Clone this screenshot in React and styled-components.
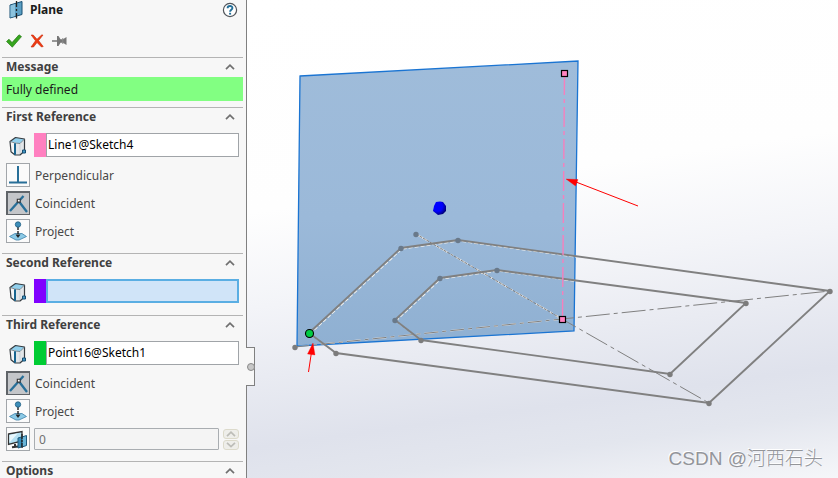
import React, { useState } from 'react';
import styled, { createGlobalStyle } from 'styled-components';

const GlobalStyle = createGlobalStyle`
    * {
        box-sizing: border-box;
    }
    body {
        margin: 0;
        font-family: "Noto Sans", "Open Sans", sans-serif;
        font-size: 12px;
        color: #1a1a1a;
    }
    button, input {
        font: inherit;
        color: inherit;
    }
`;

const Workspace = styled.main`
    display: flex;
    height: 100vh;
    overflow: hidden;
`;

const Panel = styled.aside`
    position: relative;
    flex: 0 0 247px;
    background: #f7f7f7;
    border-right: 1px solid #808080;
    padding: 0 3px 0 2px;
`;

const PanelHeader = styled.header`
    display: flex;
    align-items: center;
    gap: 6px;
    height: 20px;
    padding: 0 5px 0 6px;
`;

const PanelTitle = styled.h1`
    flex: 1;
    margin: 0;
    font-size: 12px;
    line-height: 20px;
    font-weight: bold;
`;

const IconButton = styled.button`
    display: flex;
    padding: 0;
    border: 0;
    background: none;
`;

const Actions = styled.div`
    display: flex;
    align-items: center;
    gap: 8px;
    height: 37px;
    padding: 4px 4px 0;
`;

const Section = styled.section`
    border-top: 1px solid #b4b4b4;
    padding-bottom: ${props => props.$space}px;
`;

const SectionTitle = styled.h2`
    margin: 0;
    font-size: 12px;
`;

const SectionToggle = styled.button`
    display: flex;
    align-items: center;
    justify-content: space-between;
    width: 100%;
    height: 19px;
    padding: 0 8px 2px 4px;
    border: 0;
    background: none;
    color: #404040;
    font-weight: bold;
    line-height: 17px;
    text-align: left;
`;

const Message = styled.p`
    margin: 0;
    padding: 1px 4px 0;
    height: 24px;
    line-height: 24px;
    background: #82ff82;
`;

const Rows = styled.div`
    display: flex;
    flex-direction: column;
    gap: 4px;
    padding: 6px 4px 0;
`;

const Row = styled.div`
    display: flex;
    align-items: center;
    height: 24px;
    gap: ${props => props.$gap || 5}px;
`;

const FieldRow = styled(Row)`
    margin-bottom: 2px;
    gap: 4px;
`;

const FieldLabel = styled.label`
    display: flex;
    align-items: center;
    width: 24px;
    height: 24px;
    padding: 2px 0 0 2px;
`;

const Selection = styled.div`
    flex: 1;
    display: flex;
    height: 24px;
    border-left: 12px solid ${props => props.$color};
`;

const SelectionInput = styled.input`
    flex: 1;
    min-width: 0;
    padding: 0 1px 2px;
    border: ${props => (props.$active ? '2px solid #5aaee3' : '1px solid #a0a4a8')};
    border-radius: 0;
    background: ${props => (props.$active ? '#d0e4f8' : '#ffffff')};
    color: #000000;
    outline: none;
`;

const MateButton = styled.button`
    display: flex;
    flex: none;
    align-items: center;
    justify-content: center;
    width: 24px;
    height: 24px;
    padding: 0;
    border: ${props => (props.$pressed ? '2px solid #606468' : '1px solid #a2a6aa')};
    border-width: ${props => (props.$pressed ? '2px 1px 1px 2px' : '1px')};
    background: ${props => (props.$pressed ? '#c4c6c9' : '#fbfbfb')};
`;

const MateLabel = styled.label`
    color: #484848;
`;

const CountInput = styled.input`
    flex: 1;
    min-width: 0;
    height: 22px;
    padding: 0 4px;
    border: 1px solid #a9adb1;
    border-radius: 1px;
    background: #f4f4f4;
    color: #707070;
`;

const Spinner = styled.div`
    display: flex;
    flex-direction: column;
    gap: 1px;
`;

const SpinButton = styled.button`
    display: flex;
    align-items: center;
    justify-content: center;
    width: 16px;
    height: 10px;
    padding: 0;
    border: 1px solid #dcdacb;
    border-radius: 3px;
    background: #eeeeea;
`;

const PanelHandle = styled.button`
    position: absolute;
    top: 347px;
    right: -9px;
    display: flex;
    align-items: center;
    justify-content: flex-start;
    width: 9px;
    height: 39px;
    padding: 0 0 0 1px;
    border: 1px solid #808080;
    border-left: 0;
    background: #f7f7f7;
    z-index: 1;
    &::before {
        content: "";
        flex: none;
        width: 6px;
        height: 6px;
        border: 1px solid #8a8a8a;
        border-radius: 50%;
        background: #c8c8c8;
    }
`;

const Viewport = styled.div`
    position: relative;
    flex: 1;
    min-width: 0;
    background: linear-gradient(172deg, #ffffff 0%, #fefefe 38%, #f3f4f8 55%, #dfe2ec 80%, #e3e6ee 88%, #f5f6f9 100%);
`;

const Scene = styled.svg`
    display: block;
    width: 100%;
    height: 100%;
`;

const Watermark = styled.span`
    position: absolute;
    right: 15px;
    bottom: 4px;
    font-family: "Liberation Sans", "Noto Sans CJK SC", sans-serif;
    font-weight: 300;
    font-size: 19px;
    line-height: 30px;
    color: #93959a;
    text-shadow: -1px -1px 0 #ffffff;
    white-space: nowrap;
`;

const Chevron = ({ color = '#707070', down, width = 10 }) => (
    <svg width={width} height="6" viewBox="0 0 10 6" fill="none" stroke={color} strokeWidth="1.7">
        <path d={down ? 'M1 0.8 5 4.6 9 0.8' : 'M1 5.2 5 1.2 9 5.2'} />
    </svg>
);

const PlaneIcon = () => (
    <svg width="16" height="20" viewBox="0 0 16 20">
        <path d="M2 5 14 1.500V14.500L2 18Z" fill="#5b9fc4" stroke="#174e72" />
        <path d="M2.500 5.500 7 4V16L2.500 17.500Z" fill="#8bc2dd" />
        <path d="M8.500 1V18.500" stroke="#222222" strokeWidth="1.3" strokeDasharray="6 2 2 2" />
    </svg>
);

const HelpIcon = () => (
    <svg width="16" height="16" viewBox="0 0 16 16" fill="none">
        <circle cx="8" cy="8" r="6.6" fill="#ffffff" stroke="#50545a" strokeWidth="1.2" />
        <path d="M5.6 6.3C5.6 3.2 10.5 3.3 10.4 6C10.4 7.7 8.1 7.8 8.1 9.7" stroke="#236f99" strokeWidth="1.9" />
        <path d="M7.1 10.8H9.1V12.6H7.1Z" fill="#236f99" />
    </svg>
);

const CheckIcon = () => (
    <svg width="16" height="14" viewBox="0 0 16 14">
        <path d="M0.5 7.5 3 5.2 6 8.6 13 0.8 15.5 2.6 6.3 13.2Z" fill="#36a51e" stroke="#267b16" strokeWidth="0.7" />
    </svg>
);

const CancelIcon = () => (
    <svg width="14" height="14" viewBox="0 0 14 14">
        <path d="M1.2 1H3.2L7 5.2 11.600 1H13L8.600 6.600 13.200 12.500 11.500 13 7 8.500 3.500 13H1L5.500 6.800Z" fill="#ef3b12" stroke="#c82808" strokeWidth="0.6" />
    </svg>
);

const PinIcon = () => (
    <svg width="15" height="12" viewBox="0 0 15 12" fill="#777777">
        <path d="M0 5.300H5V6.700H0ZM5 1H6.500L8.500 4.200H11L14.500 2V10L11 7.800H8.500L6.500 11H5Z" />
        <path d="M10.800 3V9" stroke="#8c8c8c" />
    </svg>
);

const CubeIcon = () => (
    <svg width="20" height="21" viewBox="0 0 20 21" strokeLinejoin="round">
        <path d="M2 5.500 7.500 1.500 16.500 3 12 7.500Z" fill="#91d0ed" />
        <path d="M2 5.500 7 7V19L3 15.800Z" fill="#f4f6f7" />
        <path d="M7 7 12 7.500 16.500 3V15L12 19H7Z" fill="#e2e6e9" />
        <path d="M12 7.500V18" stroke="#ccd1d5" />
        <path d="M2 5.500 7.500 1.500 16.500 3V15L12 19H7L3 15.800Z" fill="none" stroke="#363c41" strokeWidth="1.2" />
        <path d="M2 5.500 7 7 12 7.500 16.500 3" fill="none" stroke="#65727b" strokeWidth="0.8" />
        <path d="M7 7.200V18.800" stroke="#17648f" strokeWidth="2" />
        <path d="M14.500 14H17.500V17H14.500Z" fill="#4599c5" stroke="#174e72" />
    </svg>
);

const PerpendicularIcon = () => (
    <svg width="20" height="20" viewBox="0 0 20 20" stroke="#286f98" strokeWidth="2">
        <path d="M10 1V17M1 17.5H19" />
    </svg>
);

const CoincidentIcon = () => (
    <svg width="20" height="20" viewBox="0 0 20 20" fill="none">
        <path d="M1 17 14.5 2M10 7.5 18 18" stroke="#286f98" strokeWidth="2.3" />
        <path d="M8.300 5.200H11.200V8.100H8.300Z" fill="#ffffff" stroke="#333333" strokeWidth="1.1" />
    </svg>
);

const ProjectIcon = () => (
    <svg width="20" height="20" viewBox="0 0 20 20">
        <path d="M1.500 15.500 7 12.500H14L18.500 15.500 11 19H8Z" fill="#8bcae7" stroke="#3d82a8" strokeWidth="0.8" />
        <path d="M10 6V15" stroke="#222222" strokeWidth="1.4" strokeDasharray="3 1" />
        <path d="M7.500 13.500H12.500L10 17Z" fill="#222222" />
        <circle cx="10" cy="3.500" r="2.700" fill="#3e8fba" stroke="#1e5d82" strokeWidth="0.8" />
    </svg>
);

const InstancesIcon = () => (
    <svg width="22" height="21" viewBox="0 0 22 21">
        <path d="M1.500 5 15 2.500V12L1.500 15.500Z" fill="#b4e0f2" stroke="#333333" strokeWidth="1.3" />
        <path d="M2.500 13.500V6L11 4.300Z" fill="#e8f7fc" />
        <path d="M5 18.300 11 17.500M8 15V18" fill="none" stroke="#333333" strokeWidth="2" />
        <path d="M11 9 14.500 8V18L11 19Z" fill="#3b8db8" stroke="#1c587b" />
        <path d="M15 8 19.500 6.500V16.500L15 18Z" fill="#69b5d8" stroke="#1c587b" />
        <path d="M15 5V20" stroke="#222222" strokeWidth="1.3" strokeDasharray="5 1 2 1" />
    </svg>
);

const outerLoop = '309,333 401,248 458,240 830,291 709,403 336,353';
const innerLoop = '395,320 440,278 497,270 746,303 670,374 421,340';
const sketchPoints = [
    [401, 248], [458, 240], [830, 291], [709, 403], [336, 353],
    [395, 320], [440, 278], [497, 270], [746, 303], [670, 374], [421, 340],
    [416, 234], [295, 347]
];

const ModelScene = () => (
    <Scene viewBox="247 0 591 478" preserveAspectRatio="xMinYMin meet" role="img" aria-label="Plane preview">
        <defs>
            <linearGradient id="planeFill" x1="0" y1="0" x2="0" y2="1">
                <stop offset="0" stopColor="#9fbcda" />
                <stop offset="0.55" stopColor="#9bb9d9" />
                <stop offset="1" stopColor="#8fb0d2" />
            </linearGradient>
            <radialGradient id="originFill" cx="0.35" cy="0.35" r="0.75">
                <stop offset="0.5" stopColor="#0000ff" />
                <stop offset="1" stopColor="#000058" />
            </radialGradient>
            <clipPath id="planeClip">
                <path d="M300 76 578 61 574 331 297 346Z" />
            </clipPath>
        </defs>
        <path d="M300 76 578 61 574 331 297 346Z" fill="url(#planeFill)" stroke="#1a74d2" strokeWidth="1.3" />
        <g clipPath="url(#planeClip)" fill="none" stroke="#f1f1ee" strokeWidth="1.2" strokeDasharray="4 2" transform="translate(1 1)">
            <polygon points={outerLoop} />
            <polygon points={innerLoop} />
        </g>
        <g clipPath="url(#planeClip)" stroke="#e8e8e8" strokeWidth="1.5">
            <path d="M416 234 562 319" strokeDasharray="14 3 3 3" />
            <path d="M295 347 562 319" strokeDasharray="14 4 4 4" />
        </g>
        <g stroke="#808080" strokeWidth="1" fill="none">
            <path d="M416 234 562 319" strokeDasharray="3 1" />
            <path d="M562 319 709 403" strokeDasharray="24 4 4 4" strokeDashoffset="8" />
            <path d="M295 347 562 319" strokeDasharray="14 4 4 4" />
            <path d="M562 319 830 291" strokeDasharray="24 4 4 4" strokeDashoffset="12" />
        </g>
        <g fill="none" stroke="#808080" strokeWidth="1.9">
            <polygon points={outerLoop} />
            <polygon points={innerLoop} />
        </g>
        {sketchPoints.map(([x, y]) => (
            <circle key={`${x}-${y}`} cx={x} cy={y + 0.5} r="2.7" fill={x < 570 && y < 335 ? '#69798a' : '#7c7c7c'} />
        ))}
        <path d="M564.5 73 562.5 319" stroke="#f580bd" strokeWidth="1.4" strokeDasharray="20 4 4 4" strokeDashoffset="-2" />
        <g fill="#ff82c0" stroke="#000000" strokeWidth="1.2">
            <rect x="561.5" y="70.5" width="6" height="6" />
            <rect x="559.5" y="316.5" width="6" height="6" />
        </g>
        <circle cx="309.5" cy="333.5" r="4" fill="#00cc44" stroke="#000000" strokeWidth="1.1" />
        <path d="M436 202 440 201.500 443 202 446 206V211L443 214 438 215 433 211 434 206Z" fill="url(#originFill)" />
        <g stroke="#ff0000" fill="#ff0000">
            <path d="M638 206 576 182" />
            <path d="M566 179 578 179.500 575.500 186Z" strokeWidth="0.3" />
            <path d="M308.500 372 311.500 352" />
            <path d="M313 343 315 355 307.500 354Z" strokeWidth="0.3" />
        </g>
    </Scene>
);

const PanelSection = ({ title, space = 10, children }) => {
    const [open, setOpen] = useState(true);
    return (
        <Section $space={space}>
            <SectionTitle>
                <SectionToggle type="button" aria-expanded={open} onClick={() => setOpen(!open)}>
                    {title}
                    <Chevron down={!open} />
                </SectionToggle>
            </SectionTitle>
            {open && children}
        </Section>
    );
};

const ReferenceField = ({ id, label, color, initial, active }) => {
    const [value, setValue] = useState(initial);
    return (
        <FieldRow>
            <FieldLabel htmlFor={id} aria-label={label}><CubeIcon /></FieldLabel>
            <Selection $color={color}>
                <SelectionInput id={id} $active={active} value={value} onChange={e => setValue(e.target.value)} />
            </Selection>
        </FieldRow>
    );
};

const mateIcons = {
    Perpendicular: PerpendicularIcon,
    Coincident: CoincidentIcon,
    Project: ProjectIcon
};

const MateOptions = ({ name, options }) => {
    const [selected, setSelected] = useState('Coincident');
    return options.map(option => {
        const Icon = mateIcons[option];
        const id = `${name}-${option}`;
        return (
            <Row key={option}>
                <MateButton
                    id={id}
                    type="button"
                    $pressed={selected === option}
                    aria-pressed={selected === option}
                    onClick={() => setSelected(option)}
                >
                    <Icon />
                </MateButton>
                <MateLabel htmlFor={id}>{option}</MateLabel>
            </Row>
        );
    });
};

const PlanePanel = () => (
    <Panel>
        <PanelHeader>
            <PlaneIcon />
            <PanelTitle>Plane</PanelTitle>
            <IconButton type="button" aria-label="Help"><HelpIcon /></IconButton>
        </PanelHeader>
        <Actions>
            <IconButton type="button" aria-label="OK"><CheckIcon /></IconButton>
            <IconButton type="button" aria-label="Cancel"><CancelIcon /></IconButton>
            <IconButton type="button" aria-label="Keep visible"><PinIcon /></IconButton>
        </Actions>
        <PanelSection title="Message" space={6}>
            <Message>Fully defined</Message>
        </PanelSection>
        <PanelSection title="First Reference">
            <Rows>
                <ReferenceField id="first" label="First reference" color="#ff80c0" initial="Line1@Sketch4" />
                <MateOptions name="first" options={['Perpendicular', 'Coincident', 'Project']} />
            </Rows>
        </PanelSection>
        <PanelSection title="Second Reference">
            <Rows>
                <ReferenceField id="second" label="Second reference" color="#8000ff" initial="" active />
            </Rows>
        </PanelSection>
        <PanelSection title="Third Reference">
            <Rows>
                <ReferenceField id="third" label="Third reference" color="#00cc33" initial="Point16@Sketch1" />
                <MateOptions name="third" options={['Coincident', 'Project']} />
                <Row $gap={4}>
                    <MateButton as="label" htmlFor="instances" aria-label="Number of planes">
                        <InstancesIcon />
                    </MateButton>
                    <CountInput id="instances" defaultValue="0" disabled />
                    <Spinner>
                        <SpinButton type="button" aria-label="Increase" disabled><Chevron color="#bdbdb8" /></SpinButton>
                        <SpinButton type="button" aria-label="Decrease" disabled><Chevron color="#bdbdb8" down /></SpinButton>
                    </Spinner>
                </Row>
            </Rows>
        </PanelSection>
        <PanelSection title="Options" />
        <PanelHandle type="button" aria-label="Collapse panel" />
    </Panel>
);

const App = () => (
    <Workspace>
        <GlobalStyle />
        <PlanePanel />
        <Viewport>
            <ModelScene />
            <Watermark>CSDN @河西石头</Watermark>
        </Viewport>
    </Workspace>
);

export default App;
